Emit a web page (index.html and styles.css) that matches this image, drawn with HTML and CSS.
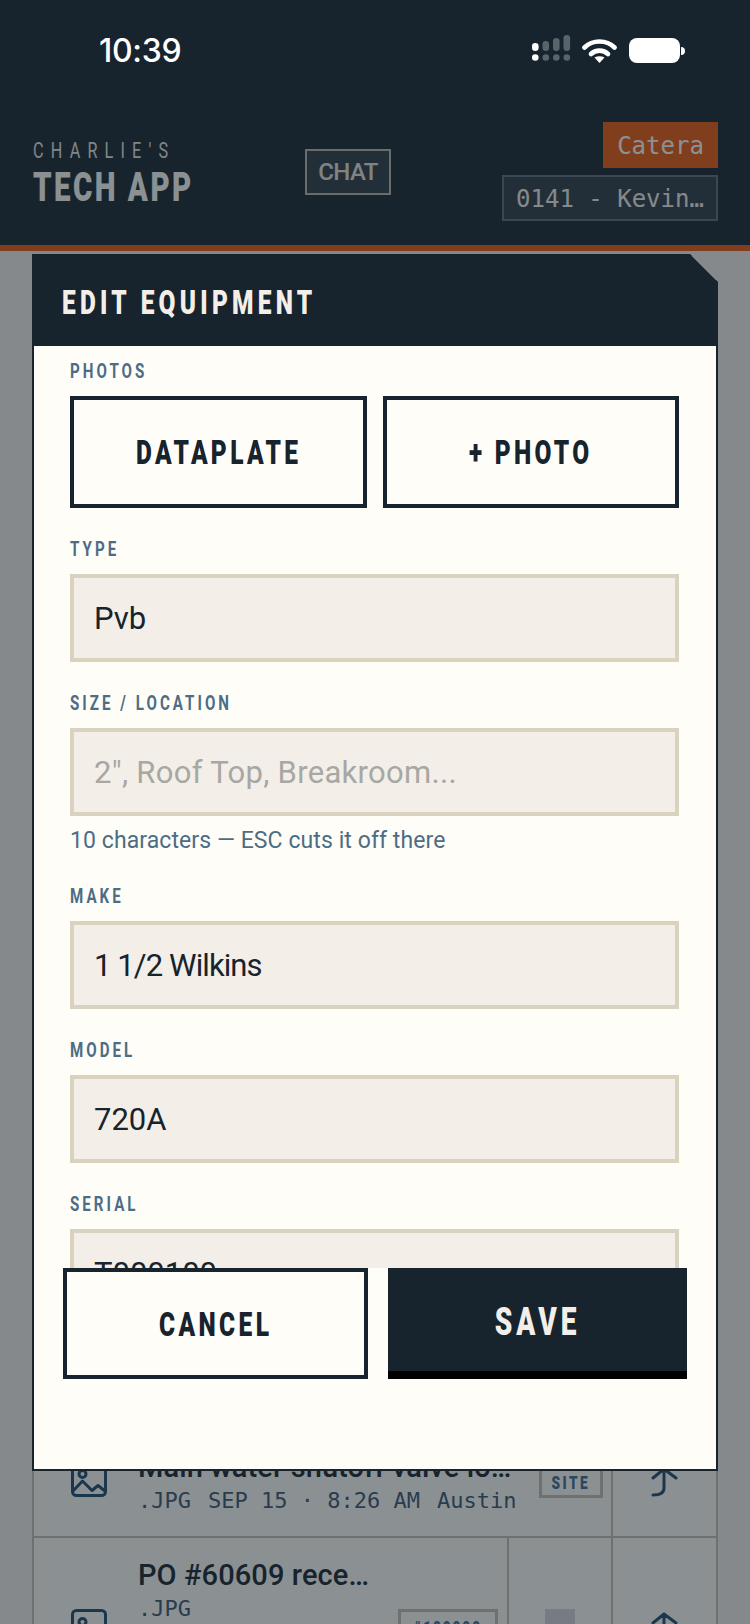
FILE: index.html
```html
<!DOCTYPE html>
<html lang="en">
<head>
<meta charset="utf-8">
<title>Edit Equipment</title>
<link rel="stylesheet" href="styles.css">
</head>
<body>
<div class="screen">
  <header class="app-head">
    <div class="status">
      <span class="time">10:39</span>
      <div class="status-icons">
        <svg class="signal" width="39" height="26" viewBox="0 0 39 26">
          <rect x="0" y="8" width="6.6" height="8" rx="3.3" fill="#fff"/>
          <circle cx="3.3" cy="22.5" r="3.3" fill="#fff"/>
          <rect x="10.5" y="6" width="6.6" height="10" rx="3.3" fill="#59636a"/>
          <circle cx="13.8" cy="22.5" r="3.3" fill="#59636a"/>
          <rect x="21" y="3" width="6.6" height="13" rx="3.3" fill="#59636a"/>
          <circle cx="24.3" cy="22.5" r="3.3" fill="#59636a"/>
          <rect x="31.5" y="0" width="6.6" height="16" rx="3.3" fill="#59636a"/>
          <circle cx="34.8" cy="22.5" r="3.3" fill="#59636a"/>
        </svg>
        <svg class="wifi" width="35" height="26" viewBox="0 0 35 26">
          <path d="M2.5 10.5C10.5 2.5 24.5 2.5 32.5 10.5" fill="none" stroke="#fff" stroke-width="4.6" stroke-linecap="round"/>
          <path d="M9 17C13.5 12.5 21.5 12.5 26 17" fill="none" stroke="#fff" stroke-width="4.6" stroke-linecap="round"/>
          <path d="M12.5 20.5C15.5 18.8 19.5 18.8 22.5 20.5L17.5 26Z" fill="#fff"/>
        </svg>
        <div class="battery"><span class="battery-body"></span><span class="battery-nub"></span></div>
      </div>
    </div>
    <div class="topbar">
      <div class="brand">
        <div class="brand-top"><span class="cond">CHARLIE'S</span></div>
        <div class="brand-main"><span class="cond">TECH APP</span></div>
      </div>
      <button class="chat">CHAT</button>
      <div class="account">
        <div class="tenant">Catera</div>
        <div class="store">0141 - Kevin…</div>
      </div>
    </div>
  </header>

  <main class="content">
    <section class="files">
      <article class="file file-one">
        <div class="file-main">
          <svg class="thumb" width="36" height="36" viewBox="0 0 36 36"><rect x="1.5" y="1.5" width="33" height="33" rx="4" fill="none" stroke="#1f4a6e" stroke-width="3"/><circle cx="11.5" cy="13" r="3.5" fill="none" stroke="#1f4a6e" stroke-width="3"/><path d="M2 30L11.5 20L21 29.5L27 24.5L34 30" fill="none" stroke="#1f4a6e" stroke-width="3" stroke-linejoin="round"/></svg>
          <div class="file-text">
            <div class="file-name">Main water shutoff valve lo…</div>
            <div class="file-meta"><span>.JPG</span><span>SEP 15 · 8:26 AM</span><span>Austin</span></div>
          </div>
          <span class="tag tag-site"><span class="cond">SITE</span></span>
        </div>
        <div class="file-action">
          <svg class="upload" width="28" height="30" viewBox="0 0 28 30"><path d="M2 11L13 2L25 11M13 2V21Q13 28 2 28" fill="none" stroke="#1f4a6e" stroke-width="3" stroke-linecap="round" stroke-linejoin="round"/></svg>
        </div>
      </article>
      <article class="file file-two">
        <div class="file-main">
          <svg class="thumb" width="36" height="36" viewBox="0 0 36 36"><rect x="1.5" y="1.5" width="33" height="33" rx="4" fill="none" stroke="#1f4a6e" stroke-width="3"/><circle cx="11.5" cy="13" r="3.5" fill="none" stroke="#1f4a6e" stroke-width="3"/><path d="M2 30L11.5 20L21 29.5L27 24.5L34 30" fill="none" stroke="#1f4a6e" stroke-width="3" stroke-linejoin="round"/></svg>
          <div class="file-text">
            <div class="file-name">PO #60609 rece…</div>
            <div class="file-meta"><span>.JPG</span></div>
          </div>
          <span class="tag tag-po"><span class="cond">#100000</span></span>
        </div>
        <div class="file-cell"><span class="swatch"></span></div>
        <div class="file-action">
          <svg class="upload" width="28" height="30" viewBox="0 0 28 30"><path d="M2 11L13 2L25 11M13 2V21Q13 28 2 28" fill="none" stroke="#1f4a6e" stroke-width="3" stroke-linecap="round" stroke-linejoin="round"/></svg>
        </div>
      </article>
    </section>
  </main>

  <div class="overlay">
    <div class="modal-frame">
      <form class="modal">
        <h1 class="modal-title"><span class="cond">EDIT EQUIPMENT</span></h1>
        <div class="modal-body">
          <div class="field-label"><span class="cond">PHOTOS</span></div>
          <div class="photo-buttons">
            <button type="button" class="photo-btn"><span class="cond">DATAPLATE</span></button>
            <button type="button" class="photo-btn"><span class="cond">+ PHOTO</span></button>
          </div>
          <label class="field-label"><span class="cond">TYPE</span></label>
          <input class="field-input" value="Pvb">
          <label class="field-label"><span class="cond">SIZE / LOCATION</span></label>
          <input class="field-input" placeholder="2&quot;, Roof Top, Breakroom...">
          <p class="hint">10 characters — ESC cuts it off there</p>
          <label class="field-label"><span class="cond">MAKE</span></label>
          <input class="field-input field-input-tight" value="1 1/2 Wilkins">
          <label class="field-label"><span class="cond">MODEL</span></label>
          <input class="field-input" value="720A">
          <label class="field-label"><span class="cond">SERIAL</span></label>
          <input class="field-input" value="T000100">
        </div>
        <div class="modal-foot">
          <button type="button" class="btn-cancel"><span class="cond">CANCEL</span></button>
          <button type="button" class="btn-save"><span class="cond">SAVE</span></button>
        </div>
      </form>
    </div>
  </div>
</div>
</body>
</html>
```
FILE: styles.css
```css
* { box-sizing: border-box; }
html, body { margin: 0; padding: 0; }
body { background: #f3efe8; font-family: Roboto, "Liberation Sans", sans-serif; color: #17232d; }
button { font: inherit; color: inherit; background: none; border: 0; padding: 0; }

.screen { position: relative; width: 750px; height: 1624px; overflow: hidden; }

/* condensed display type: no condensed family is installed */
.cond { display: inline-block; white-space: nowrap; transform: scaleX(0.72); transform-origin: center; }
.brand .cond, .modal-title .cond, .field-label .cond { transform-origin: left center; }

/* header */
.app-head { height: 251px; background: #17232d; border-bottom: 6px solid #e8590c; }
.status { position: relative; z-index: 3; height: 100px; display: flex; justify-content: space-between; align-items: flex-start; padding: 36px 65px 0 99px; }
.time { font-family: Inter, sans-serif; font-size: 32px; font-weight: 500; line-height: 30px; color: #fff; letter-spacing: -0.3px; }
.status-icons { display: flex; align-items: flex-start; }
.signal { margin: -1px 11px 0 0; }
.wifi { margin: 1px 12px 0 0; }
.battery { display: flex; align-items: center; margin-top: 2px; }
.battery-body { width: 51px; height: 25px; border-radius: 8px; background: #fff; }
.battery-nub { width: 4px; height: 8px; margin-left: 1px; border-radius: 0 4px 4px 0; background: #fff; }

.topbar { display: flex; align-items: flex-start; height: 145px; padding: 22px 32px 0 33px; }
.brand { width: 272px; padding-top: 15px; }
.brand-top { height: 26px; font-size: 22.5px; line-height: 26px; letter-spacing: 10px; color: #e8e6df; white-space: nowrap; }
.brand-main { height: 38px; margin-top: 5px; font-size: 41px; line-height: 38px; font-weight: 900; letter-spacing: 3.4px; color: #fffdf8; white-space: nowrap; }
.chat { width: 86px; height: 46px; margin-top: 27px; border: 2px solid #bdb7a3; background: #2d3943; font-size: 24px; font-weight: 500; letter-spacing: -0.6px; color: #e6e2d8; }
.account { margin-left: auto; display: flex; flex-direction: column; align-items: flex-end; gap: 7px; font-family: "DejaVu Sans Mono", monospace; font-size: 24px; }
.tenant { width: 115px; height: 46px; line-height: 49px; text-align: center; background: #e8590c; color: #fffdf8; }
.store { width: 216px; height: 46px; line-height: 45px; text-align: center; border: 2px solid #5c6c78; background: #2d3943; color: #f3efe8; white-space: nowrap; }

/* list behind the dialog */
.content { padding: 1169px 32px 0; }
.files { border: solid #c4bfac; border-width: 0 2px; background: #fffdf8; }
.file { display: flex; border-bottom: 2px solid #c4bfac; }
.file-one { height: 118px; }
.file-two { height: 180px; }
.file-main { flex: 1; min-width: 0; display: flex; align-items: center; padding-left: 37px; }
.thumb { flex: none; }
.file-one .thumb { margin-top: 2px; }
.file-text { flex: 1; min-width: 0; margin-left: 31px; }
.file-name { font-size: 29px; font-weight: 500; line-height: 38px; letter-spacing: 0.1px; white-space: nowrap; }
.file-meta { display: flex; gap: 17px; font-family: "DejaVu Sans Mono", monospace; font-size: 22px; line-height: 30px; color: #3a556e; white-space: nowrap; }
.file-one .file-text { margin-top: 8px; }
.file-two .file-text { align-self: flex-start; padding-top: 18px; }
.tag { flex: none; height: 36px; display: flex; align-items: center; justify-content: center; border: 3px solid #c4bfac; font-weight: 900; font-size: 19px; color: #3d6a90; }
.tag-site { width: 64px; margin: 4px 8px 0 0; padding-top: 7px; letter-spacing: 3.4px; border-top-width: 0; }
.tag-po { width: 100px; margin: 0 9px 0 0; letter-spacing: 2.6px; }
.file-cell { width: 104px; display: flex; justify-content: center; align-items: center; border-left: 2px solid #c4bfac; }
.swatch { width: 30px; height: 36px; border-radius: 1px; background: #d7d5db; }
.file-action { width: 105px; display: flex; justify-content: center; align-items: center; border-left: 2px solid #c4bfac; }
.file-one .upload { margin-top: 8px; }

/* dialog */
.overlay { position: absolute; inset: 0; z-index: 2; background: rgba(23, 35, 45, 0.5); }
.modal-frame { position: absolute; left: 32px; top: 254px; width: 686px; height: 1217px; }
.modal { display: flex; flex-direction: column; height: 100%; background: #fffdf8; border: 2px solid #17232d; clip-path: polygon(0 0, 658px 0, 100% 28px, 100% 100%, 0 100%); }
.modal-title { flex: none; height: 92px; margin: -2px -2px 0; padding: 0 0 0 30px; background: #17232d; color: #f3efe8; font-size: 34px; line-height: 96px; font-weight: 900; letter-spacing: 5.9px; white-space: nowrap; }
.modal-body { flex: 1; min-height: 0; overflow: hidden; padding: 14px 37px 0 36px; }
.field-label { display: block; height: 22px; margin-bottom: 14px; font-size: 21px; line-height: 22px; font-weight: 700; letter-spacing: 4.2px; color: #4d6d85; white-space: nowrap; }
.photo-buttons { display: grid; grid-template-columns: 1fr 1fr; gap: 16px; margin-bottom: 30px; }
.photo-btn { height: 112px; border: 4px solid #17232d; font-size: 34px; font-weight: 900; letter-spacing: 4.6px; }
.field-input { display: block; width: 100%; height: 88px; margin: 0 0 30px; padding: 0 20px; border: 4px solid #d9d2bf; border-radius: 0; background: #f3efe8; color: #17232d; font: 400 31px Roboto, sans-serif; outline: 0; }
.field-input-tight { letter-spacing: -0.9px; }
.field-input::placeholder { color: #a7a7a3; opacity: 1; letter-spacing: 0.3px; }
.field-input:has(+ .hint) { margin-bottom: 0; }
.hint { margin: 11px 0 30px; font-size: 23px; line-height: 28px; letter-spacing: 0.08px; color: #4d6d85; }
.modal-foot { flex: none; height: 201px; display: flex; gap: 20px; padding: 0 29px; background: #fffdf8; }
.btn-cancel { width: 305px; height: 111px; border: 4px solid #17232d; font-size: 34px; font-weight: 900; letter-spacing: 4.7px; }
.btn-save { width: 299px; height: 111px; padding-top: 4px; border-bottom: 8px solid #000; background: #17232d; color: #f3efe8; font-size: 39px; font-weight: 900; letter-spacing: 5.5px; }
```
